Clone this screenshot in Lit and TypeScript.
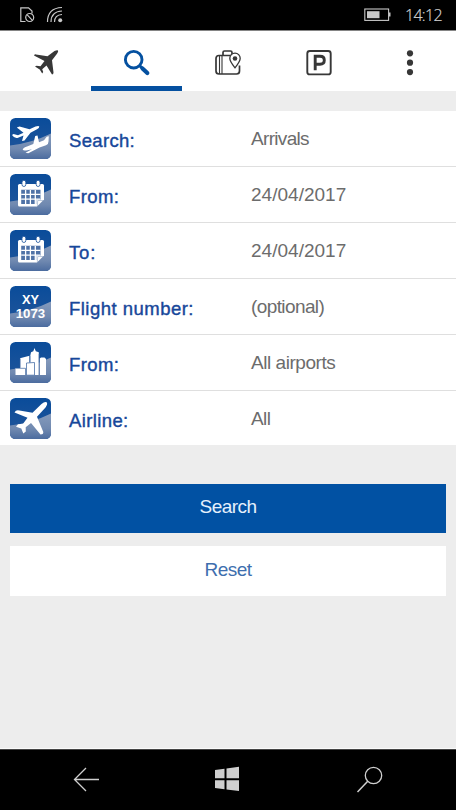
import { LitElement, html, css, svg } from "lit";
import { customElement } from "lit/decorators.js";
import { styleMap } from "lit/directives/style-map.js";

const tile = (content: unknown) => html`
  <svg class="tile" viewBox="0 0 41 41">
    <defs>
      <linearGradient id="top" x1="0" y1="0" x2="0" y2="1">
        <stop offset="0" stop-color="#0a4c9a" />
        <stop offset="0.6" stop-color="#19529a" />
      </linearGradient>
      <linearGradient id="low" x1="0" y1="0" x2="0" y2="1">
        <stop offset="0.1" stop-color="#8298ba" />
        <stop offset="0.6" stop-color="#7089b0" />
        <stop offset="1" stop-color="#4c6c9f" />
      </linearGradient>
      <clipPath id="round"><rect width="41" height="41" rx="5.5" /></clipPath>
    </defs>
    <g clip-path="url(#round)">
      <rect width="41" height="41" fill="url(#top)" />
      <path d="M0 27.500Q22 25 41 15.500V41H0Z" fill="url(#low)" />
      ${content}
    </g>
  </svg>`;

const flights = svg`<g fill="#fff">
  <path d="M2 17L3.500 16L8 17.300L13.500 14.700L6.800 9.600L9.500 8.400L19.500 11.300L25.500 8.500Q28.800 7.300 29.300 8.500Q29.500 9.900 27 11.300L20.500 14.700L14.500 22.600L12 23L13.500 17.600L7.500 19.900Q4.500 20.700 2 17Z"/>
  <path d="M38.800 18.300L36.700 18.700L34 22.200L29 24.200L27.500 17.400L25.200 18L23.300 26L17 28.500Q12.300 30.300 12.800 31.700Q13.500 33 17.500 32.200L22 31.200L15.500 34.800L18.300 35.300L29.500 29.500L36 27.300Q38.500 26.400 38.500 23.500Z"/>
</g>`;

const calendar = svg`
  <path d="M9.500 10H32.500Q34 10 34 11.500V25.500L27 32.500H9.500Q8 32.500 8 31V11.500Q8 10 9.500 10Z" fill="#fff"/>
  <path d="M11.200 15.800H30.500V25.500H26.200V30H11.200Z" fill="#4f72a6"/>
  <path d="M11.200 20.300H30.500M11.200 25.200H30M15.600 16V30M20.400 16V30M25.300 16V30" stroke="#fff" stroke-width="1.300"/>
  <path d="M27.300 32L27.700 26.500H33.500" fill="none" stroke="#8fa4c4" stroke-width="0.600"/>
  <rect x="12" y="6.300" width="3.800" height="6.200" rx="1.900" fill="#fff" stroke="#19529a" stroke-width="0.800"/>
  <rect x="26.200" y="6.300" width="3.800" height="6.200" rx="1.900" fill="#fff" stroke="#19529a" stroke-width="0.800"/>`;

const flightNo = svg`<g fill="#fff" text-anchor="middle" class="code">
  <text x="20.500" y="17.500" textLength="17" lengthAdjust="spacingAndGlyphs">XY</text>
  <text x="20.500" y="31.500" textLength="29.500" lengthAdjust="spacingAndGlyphs">1073</text>
</g>`;

const city = svg`<g fill="#fff">
  <path d="M10 26V16.200L19.500 13.800V33H10Z"/>
  <path d="M20.300 33V13.500L21 10.300L23.300 9.300L24.500 6L25.800 9.300L28.800 10.300V33Z"/>
  <path d="M29.700 33V16.500L31 15.500H34.500L36 17V33Z"/>
  <path d="M5.500 26H16V33H5.500Z"/>
  <path d="M15.500 33V26.300H5.500M10.200 25.900V16.500M19.800 20V14M29.200 33V12" fill="none" stroke="#3b639d" stroke-width="0.700"/>
  <path d="M16.500 33.200V21L24.500 20.500V33.200Z" stroke="#4a70a6" stroke-width="0.800"/>
</g>`;

const airline = svg`<path fill="#fff" d="M4.500 14.500Q6 11.500 9.500 12.600L22.500 14.700L31.500 5.900Q35 3 36.700 4.300Q38 6 35.500 9.500L27 18.800L33.300 34Q33.500 36.500 30.500 36.500L21 25L15.700 29.300L15.800 33.500L13.300 35.500L11.300 30.500L6 28.700L8 26.200L13 25.700L17.500 19.800Z"/>`;

interface Row { icon: unknown; label: string; value: string; ls: number; vs: number }

const rows: Row[] = [
  { icon: flights, label: "Search:", value: "Arrivals", ls: 0.33, vs: -0.68 },
  { icon: calendar, label: "From:", value: "24/04/2017", ls: 0.42, vs: 0.02 },
  { icon: calendar, label: "To:", value: "24/04/2017", ls: 0.8, vs: 0.02 },
  { icon: flightNo, label: "Flight number:", value: "(optional)", ls: 0.48, vs: -0.6 },
  { icon: city, label: "From:", value: "All airports", ls: 0.42, vs: -0.45 },
  { icon: airline, label: "Airline:", value: "All", ls: 0.38, vs: -0.6 },
];

@customElement("app-root")
export class AppRoot extends LitElement {
  static styles = css`
    :host { display: flex; flex-direction: column; height: 810px; width: 456px; background: #ededed;
      font-family: "Liberation Sans", Arial, sans-serif; overflow: hidden; }
    svg { display: block; }
    .status { height: 30px; box-sizing: border-box; background: #000; display: flex;
      align-items: center; padding: 0 16px 0 19px; color: #d2d2d2; }
    .status .wifi { margin-left: 10px; }
    .status .battery { margin-left: auto; }
    .time { font: 16px/30px "Open Sans", "Noto Sans", sans-serif; font-weight: 300; width: 35px; margin-left: 14px;
      letter-spacing: -0.7px; white-space: nowrap; -webkit-text-stroke: 0.2px #d2d2d2; }
    .tabs { height: 61px; background: #fff; display: grid; grid-template-columns: repeat(5, 1fr);
      border-top: 1px solid #858585; box-sizing: border-box; }
    .tab { display: flex; justify-content: center; align-items: center; padding-top: 9px;
      box-sizing: border-box; border-bottom: 5px solid transparent; }
    .tab.active { border-color: #0450a0; }
    .list { margin-top: 20px; background: #fff; }
    .row { height: 56px; box-sizing: border-box; border-bottom: 1px solid #dfdfdf; display: grid;
      grid-template-columns: 59.5px 182px 1fr; padding-left: 9.5px; align-items: start; }
    .row:last-child { height: 55px; border-bottom-color: #ededed; }
    .tile { width: 41px; height: 41px; margin-top: 6.500px; }
    .label { color: #17479a; font-size: 18.500px; line-height: 22px; padding-top: 18.500px;
      -webkit-text-stroke: 0.4px #17479a; }
    .value { color: #6c6c6c; font-size: 19px; line-height: 22px; padding-top: 17px; }
    .code { font: bold 12px "Liberation Sans", sans-serif; }
    .actions { padding: 38px 10px 0; display: flex; flex-direction: column; gap: 13px; flex: 1; }
    .button { border: 0; margin: 0; padding: 0 0 3px; height: 49px; background: #0151a3; color: #e6f0fc;
      font: 19px "Liberation Sans", sans-serif; letter-spacing: -0.55px; }
    .button.plain { height: 50px; background: #fff; color: #3e6eae; }
    .nav { height: 61px; background: #000; border-top: 1px solid #444; box-sizing: border-box; }
    .edge { height: 1px; background: #fafafa; }
  `;

  render() {
    return html`
      <div class="status">
        <svg width="17" height="20" viewBox="0 0 17 20" fill="none" stroke="#c8c8c8" stroke-width="1.200">
          <path d="M6.500 16.500H1.800V2.800H9.500L13 6V8.500" />
          <circle cx="10.700" cy="12.500" r="4" /><path d="M8 9.700L13.400 15.300" />
        </svg>
        <svg class="wifi" width="18" height="20" viewBox="0 0 18 20" fill="none" stroke="#c8c8c8" stroke-width="1.200">
          <path d="M1.500 17Q1.500 3 16 2.500M5 17Q5 6.500 16 6M8.500 17Q8.500 10 16 9.500" />
          <circle cx="14.200" cy="15.200" r="2" fill="#c8c8c8" stroke="none" />
        </svg>
        <svg class="battery" width="27" height="14" viewBox="0 0 27 14">
          <rect x="0.800" y="1" width="23.800" height="11.400" fill="none" stroke="#c8c8c8" stroke-width="1.100" />
          <rect x="3" y="3.200" width="12.500" height="7" fill="#c8c8c8" /><rect x="25" y="4.500" width="1.500" height="4" fill="#c8c8c8" />
        </svg>
        <span class="time">14:12</span>
      </div>

      <div class="tabs">
        <div class="tab">
          <svg width="28" height="28" viewBox="0 0 28 28">
            <path fill="#373737" d="M2 6.500Q2.500 5.200 4 5.400L15.500 7.300L22.500 2Q25.300 .6 26 1.500Q26.700 2.500 25 4.700L20 11.300L21.500 23.500Q21.500 25.300 20 25.500L14.500 16.500L10.200 20.300L11.200 23L10.200 24.500L7.700 20.500L3 17.600L4.500 16.700L8.500 17.300L12.500 12Z" />
          </svg>
        </div>
        <div class="tab active">
          <svg width="28" height="28" viewBox="0 0 28 28" fill="none" stroke="#0450a0">
            <circle cx="10.700" cy="10.700" r="8.300" stroke-width="2.900" />
            <path d="M16.500 16.500L20 20" stroke-width="3" /><path d="M19.500 19.500L24.300 24" stroke-width="4.200" stroke-linecap="round" />
          </svg>
        </div>
        <div class="tab">
          <svg width="28" height="28" viewBox="0 0 28 28" fill="none" stroke="#373737" stroke-width="1.700">
            <path d="M9 6.500V3.500Q9 2 10.500 2H16.500Q18 2 18 3.500V5" />
            <path d="M18.500 6.500H5Q2 6.500 2 9.500V22Q2 25 5 25H22.500Q25.500 25 25.500 22V16.500" />
            <path d="M5.500 7V25M8 7V25" stroke-width="1.100" />
            <path d="M21 18.800Q15.800 12.500 15.800 9.300A5.200 5.200 0 0 1 26.200 9.300Q26.200 12.500 21 18.800Z" fill="#fff" stroke-width="1.300" />
            <circle cx="21" cy="9.500" r="2.300" fill="#373737" stroke="none" />
          </svg>
        </div>
        <div class="tab">
          <svg width="28" height="28" viewBox="0 0 28 28" fill="none" stroke="#373737">
            <rect x="2.300" y="2" width="23.400" height="23.400" rx="2.500" stroke-width="1.900" />
            <path d="M10.200 21.300V7.300H15Q19.300 7.300 19.300 11.200T15 15.200H10.200" stroke-width="2.900" />
          </svg>
        </div>
        <div class="tab">
          <svg width="28" height="28" viewBox="0 0 28 28" fill="#373737">
            <circle cx="14" cy="4.300" r="3.100" /><circle cx="14" cy="13.700" r="3.100" /><circle cx="14" cy="23.100" r="3.100" />
          </svg>
        </div>
      </div>

      <div class="list">
        ${rows.map((r) => html`
          <div class="row">
            ${tile(r.icon)}
            <span class="label" style=${styleMap({ letterSpacing: `${r.ls}px` })}>${r.label}</span>
            <span class="value" style=${styleMap({ letterSpacing: `${r.vs}px` })}>${r.value}</span>
          </div>`)}
      </div>

      <div class="actions">
        <button class="button">Search</button>
        <button class="button plain">Reset</button>
      </div>

      <div class="edge"></div>
      <div class="nav">
        <svg width="456" height="60" viewBox="0 750 456 60" fill="none" stroke="#cfcfcf" stroke-width="1.300">
          <path d="M99 779.500H74.500M86 768L74.500 779.500L86 791" />
          <path d="M215 770L224.500 768.800V778.300H215ZM226.500 768.500L239 766.800V778.300H226.500ZM215 780.200H224.500V789.200L215 788ZM226.500 780.200H239V791L226.500 789.400Z" fill="#cfcfcf" stroke="none" />
          <circle cx="373.500" cy="775.500" r="8.200" /><path d="M367.700 781.300L357.500 792" stroke-width="1.500" />
        </svg>
      </div>`;
  }
}
